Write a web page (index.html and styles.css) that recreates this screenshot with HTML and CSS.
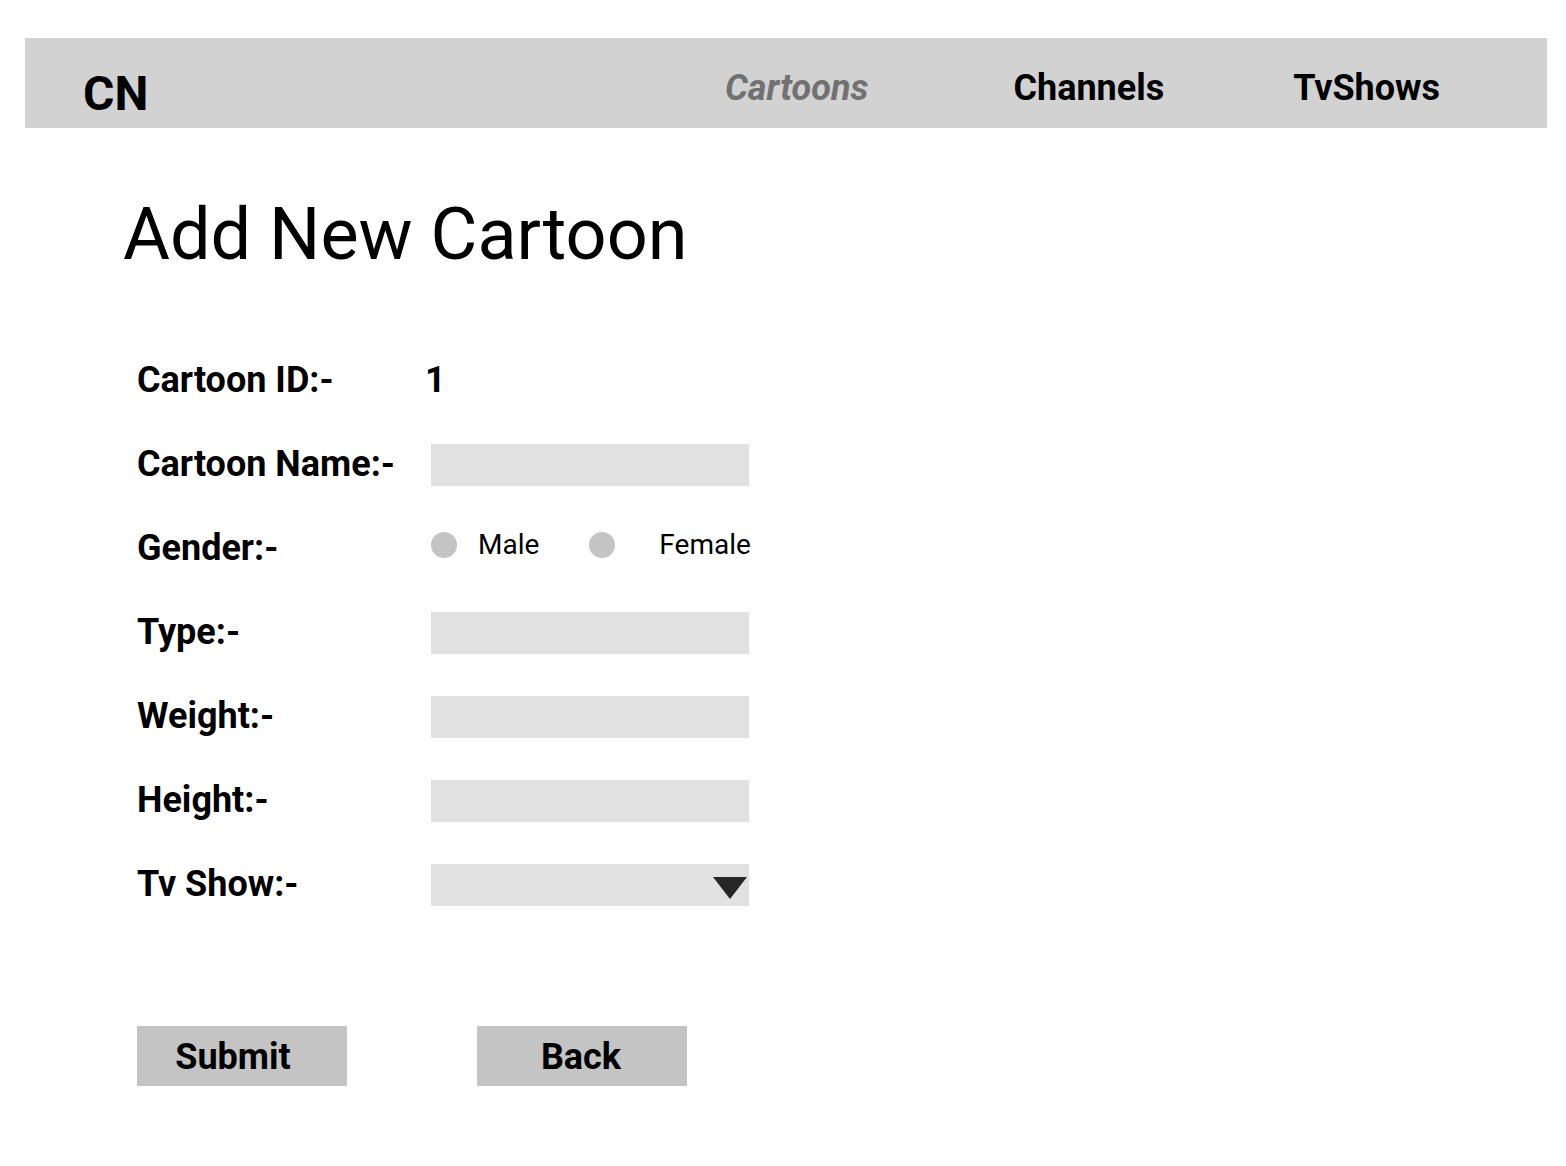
FILE: index.html
```html
<!DOCTYPE html>
<html lang="en">
<head>
<meta charset="utf-8">
<title>Add New Cartoon</title>
<link rel="stylesheet" href="styles.css">
</head>
<body>
<header class="topbar">
  <div class="brand">CN</div>
  <nav class="nav">
    <a class="nav-item nav-active" href="#">Cartoons</a>
    <a class="nav-item nav-channels" href="#">Channels</a>
    <a class="nav-item nav-shows" href="#">TvShows</a>
  </nav>
</header>
<main class="content">
  <h1 class="title">Add New Cartoon</h1>
  <form class="form">
    <div class="row">
      <span class="label">Cartoon ID:-</span>
      <span class="value">1</span>
    </div>
    <div class="row">
      <span class="label">Cartoon Name:-</span>
      <span class="field"></span>
    </div>
    <div class="row">
      <span class="label">Gender:-</span>
      <div class="radios">
        <span class="radio"></span><span class="radio-text">Male</span>
        <span class="radio radio-second"></span><span class="radio-text radio-text-second">Female</span>
      </div>
    </div>
    <div class="row">
      <span class="label">Type:-</span>
      <span class="field"></span>
    </div>
    <div class="row">
      <span class="label">Weight:-</span>
      <span class="field"></span>
    </div>
    <div class="row">
      <span class="label">Height:-</span>
      <span class="field"></span>
    </div>
    <div class="row">
      <span class="label">Tv Show:-</span>
      <span class="field select">
        <svg class="caret" width="34" height="22" viewBox="0 0 34 22"><polygon points="0,0 34,0 17,22" fill="#262626"/></svg>
      </span>
    </div>
    <div class="actions">
      <button type="button" class="btn btn-submit">Submit</button>
      <button type="button" class="btn btn-back">Back</button>
    </div>
  </form>
</main>
</body>
</html>
```
FILE: styles.css
```css
* { box-sizing: border-box; }
html, body { margin: 0; padding: 0; background: #ffffff; }
body {
  font-family: Roboto, "Liberation Sans", Arial, sans-serif;
  color: #000;
}
.topbar {
  margin: 38px 19px 0 25px;
  height: 90px;
  background: #d2d2d2;
  display: flex;
  align-items: flex-start;
  padding: 32px 107px 0 58px;
}
.brand {
  font-size: 48px;
  line-height: 48px;
  font-weight: 700;
}
.nav {
  margin-left: auto;
  display: flex;
  align-items: flex-start;
}
.nav-item {
  font-size: 36px;
  line-height: 36px;
  font-weight: 700;
  color: #000;
  text-decoration: none;
}
.nav-active {
  font-style: italic;
  color: #717171;
}
.nav-channels { margin-left: 145px; }
.nav-shows { margin-left: 129px; }

.content {
  padding: 65px 0 0 123px;
}
.title {
  margin: 0;
  font-size: 72px;
  line-height: 84px;
  font-weight: 400;
}
.form {
  margin: 83px 0 0 14px;
  display: flex;
  flex-direction: column;
  gap: 42px;
}
.row {
  display: flex;
  align-items: center;
  height: 42px;
}
.label {
  width: 294px;
  font-size: 36px;
  line-height: 42px;
  font-weight: 700;
  margin-top: -2px;
}
.value {
  font-size: 36px;
  line-height: 42px;
  font-weight: 700;
  margin-left: -6px;
  margin-top: -2px;
}
.field {
  width: 318px;
  height: 42px;
  background: #e1e1e1;
}
.select {
  display: flex;
  align-items: center;
  justify-content: flex-end;
  padding: 6px 2px 0 0;
}
.caret { display: block; }
.radios {
  display: flex;
  align-items: center;
  align-self: flex-start;
  margin-top: 3px;
  height: 28px;
}
.radio {
  width: 26px;
  height: 26px;
  border-radius: 50%;
  background: #c4c4c4;
}
.radio-text {
  font-size: 28px;
  line-height: 28px;
  margin-left: 21px;
}
.radio-second { margin-left: 50px; }
.radio-text-second { margin-left: 44px; }
.actions {
  display: flex;
  gap: 130px;
  margin-top: 78px;
}
.btn {
  width: 210px;
  height: 60px;
  border: none;
  background: #c4c4c4;
  font-family: Roboto, "Liberation Sans", Arial, sans-serif;
  font-size: 36px;
  font-weight: 700;
  color: #000;
  padding: 2px 0 0 0;
}
.btn-submit { padding-right: 18px; }
.btn-back { padding-right: 2px; }
```
